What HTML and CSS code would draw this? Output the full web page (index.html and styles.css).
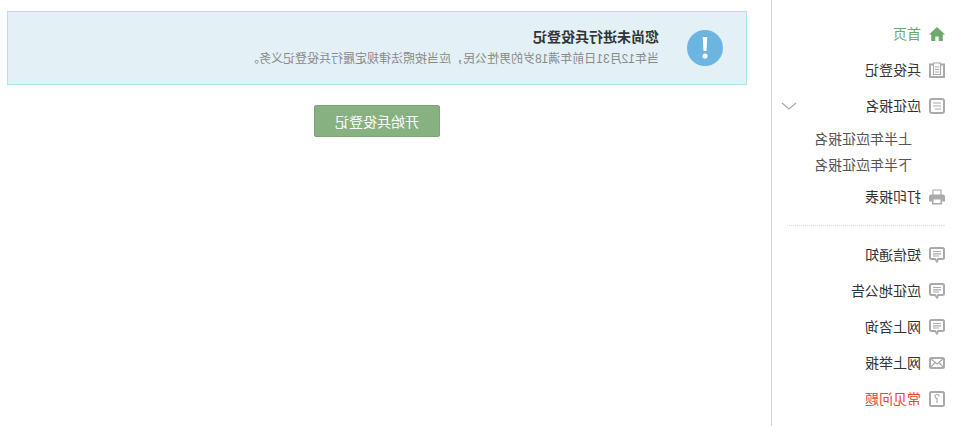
FILE: index.html
```html
<!DOCTYPE html>
<html lang="zh-CN">
<head>
  <meta charset="UTF-8" />
  <title>兵役登记</title>
  <link rel="stylesheet" href="styles.css">
</head>
<body>
  <div class="sidebar">
    <ul class="nav">
      <li class="nav-item active">
        <svg class="icon" viewBox="0 0 16 16"><path class="solid" d="M8 1 L16 8.6 H13.8 V15 H9.7 V10.4 H6.3 V15 H2.2 V8.6 H0 Z"/></svg>
        首页
      </li>
      <li class="nav-item">
        <svg class="icon" viewBox="0 0 16 16"><path class="line" d="M4 2.5 H1 V15 H15 V2.5 H12"/><path class="thin" d="M4.5 1 H11.5 V12.5 H4.5 Z M6 5 H10 M6 7.5 H10 M6 10 H10"/></svg>
        兵役登记
      </li>
      <li class="nav-item">
        <svg class="icon" viewBox="0 0 16 16"><rect class="line" x="1" y="1" width="14" height="14" rx="2"/><path class="thin" d="M4 5 H12 M4 8 H12 M4 11 H10"/></svg>
        应征报名
        <svg class="chevron" viewBox="0 0 16 8"><path class="thin" d="M1 1 L8 7 L15 1"/></svg>
      </li>
    </ul>
    <ul class="sub-nav">
      <li>上半年应征报名</li>
      <li>下半年应征报名</li>
    </ul>
    <ul class="nav">
      <li class="nav-item">
        <svg class="icon" viewBox="0 0 16 16"><path class="thin" d="M4 6 V1 H12 V6"/><path class="solid" d="M2 5.5 H14 Q16 5.5 16 7.5 V12.5 H13 V15.5 H3 V12.5 H0 V7.5 Q0 5.5 2 5.5 Z M4.5 10.5 V14 H11.5 V10.5 Z"/></svg>
        打印报表
      </li>
    </ul>
    <div class="divider"></div>
    <ul class="nav">
      <li class="nav-item">
        <svg class="icon" viewBox="0 0 16 16"><path class="line" d="M2.5 1 H13.5 Q15 1 15 2.5 V10.5 Q15 12 13.5 12 H10 L8 14.5 L6.8 12 H2.5 Q1 12 1 10.5 V2.5 Q1 1 2.5 1 Z"/><path class="thin" d="M4 4.5 H12 M4 6.8 H12 M6 9 H12"/></svg>
        短信通知
      </li>
      <li class="nav-item">
        <svg class="icon" viewBox="0 0 16 16"><path class="line" d="M2.5 1 H13.5 Q15 1 15 2.5 V10.5 Q15 12 13.5 12 H10 L8 14.5 L6.8 12 H2.5 Q1 12 1 10.5 V2.5 Q1 1 2.5 1 Z"/><path class="thin" d="M4 4.5 H12 M4 6.8 H12 M6 9 H12"/></svg>
        应征地公告
      </li>
      <li class="nav-item">
        <svg class="icon" viewBox="0 0 16 16"><path class="line" d="M2.5 1 H13.5 Q15 1 15 2.5 V10.5 Q15 12 13.5 12 H10 L8 14.5 L6.8 12 H2.5 Q1 12 1 10.5 V2.5 Q1 1 2.5 1 Z"/><path class="thin" d="M4 4.5 H12 M4 6.8 H12 M6 9 H12"/></svg>
        网上咨询
      </li>
      <li class="nav-item">
        <svg class="icon" viewBox="0 0 16 16"><rect class="line" x="1" y="3" width="14" height="10" rx="1.5"/><path class="thin" d="M1.5 3.5 L8 9 L14.5 3.5 M1.5 12.5 L6 7.5 M14.5 12.5 L10 7.5"/></svg>
        网上举报
      </li>
      <li class="nav-item faq">
        <svg class="icon" viewBox="0 0 16 16"><rect class="line" x="1" y="1" width="14" height="14" rx="1.5"/><path class="thin" d="M6 5.5 Q6 3.5 8 3.5 Q10 3.5 10 5.5 Q10 7 8 7.5 V12"/></svg>
        常见问题
      </li>
    </ul>
  </div>

  <div class="main">
    <div class="alert">
      <svg class="alert-icon" viewBox="0 0 36 36">
        <circle cx="18" cy="18" r="18" fill="#6cb5e1"/>
        <path d="M15.7 7 H20.3 L19.5 21 H16.5 Z" fill="#fff"/>
        <circle cx="18" cy="26" r="2.6" fill="#fff"/>
      </svg>
      <div class="alert-text">
        <h4>您尚未进行兵役登记</h4>
        <p>当年12月31日前年满18岁的男性公民，应当按照法律规定履行兵役登记义务。</p>
      </div>
    </div>
    <button class="btn">开始兵役登记</button>
  </div>
</body>
</html>
```

FILE: styles.css
```css
html, body {
  margin: 0;
  padding: 0;
  overflow: hidden;
}

/* the whole page reads right to left, as a mirror image */
body {
  width: 960px;
  height: 426px;
  display: flex;
  background-color: #fff;
  color: #333;
  font-family: "Liberation Sans", "Noto Sans CJK SC", sans-serif;
  font-size: 14px;
  transform: scaleX(-1);
}

ul {
  list-style: none;
  margin: 0;
  padding: 0;
}

/* Sidebar */
.sidebar {
  width: 188px;
  flex-shrink: 0;
  padding-top: 16px;
  border-right: 1px solid #d5d5d5;
}

.nav-item {
  height: 36px;
  box-sizing: border-box;
  display: flex;
  align-items: center;
  gap: 8px;
  padding: 0 0 2px 15px;
  position: relative;
}

.nav-item.active {
  color: #6fa868;
}

.nav-item.faq {
  color: #f0403a;
}

.icon {
  width: 16px;
  height: 16px;
  flex-shrink: 0;
  margin-top: 2px;
}

.line {
  fill: none;
  stroke: #aaa;
  stroke-width: 2;
}

.thin {
  fill: none;
  stroke: #aaa;
  stroke-width: 1.2;
}

.solid {
  fill: #aaa;
}

.active .solid {
  fill: #6fa868;
}

.chevron {
  width: 16px;
  height: 8px;
  position: absolute;
  left: 163px;
  top: 14px;
}

.sub-nav {
  padding: 1px 0 2px 48px;
  color: #555;
}

.sub-nav li {
  height: 26px;
  line-height: 28px;
}

.divider {
  margin: 10px 15px 11px;
  border-top: 1px dotted #ddd;
}

/* Main area */
.main {
  flex: 1;
  padding: 11px 7px 0 24px;
  display: flex;
  flex-direction: column;
  align-items: center;
}

.alert {
  width: 100%;
  box-sizing: border-box;
  height: 74px;
  display: flex;
  align-items: center;
  gap: 28px;
  padding: 0 0 1px 23px;
  background-color: #e3f1f7;
  border: 1px solid #b2e2ea;
}

.alert-icon {
  width: 36px;
  height: 36px;
  flex-shrink: 0;
  margin-top: 1px;
}

.alert-text h4 {
  margin: 0 0 3px;
  font-size: 14px;
  line-height: 20px;
  font-weight: bold;
}

.alert-text p {
  margin: 0;
  font-size: 12px;
  line-height: 18px;
  color: #888;
}

.btn {
  margin-top: 20px;
  width: 126px;
  height: 32px;
  background-color: #87b180;
  border: 1px solid #79a672;
  border-radius: 2px;
  color: #fff;
  font-family: inherit;
  font-size: 14px;
}
```
